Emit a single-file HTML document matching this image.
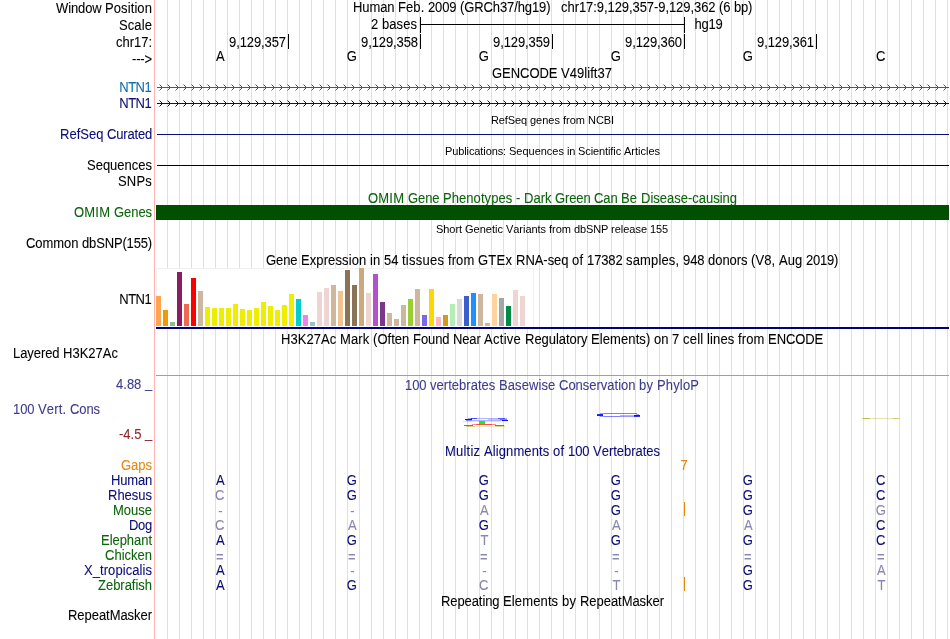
<!DOCTYPE html>
<html lang="en"><head><meta charset="utf-8"><title>UCSC Genome Browser chr17:9,129,357-9,129,362</title>
<style>
html,body{margin:0;padding:0;background:#fff;}
body{width:950px;height:639px;position:relative;overflow:hidden;font-family:"Liberation Sans", sans-serif;}
.t{position:absolute;white-space:pre;font-kerning:none;font-family:"Liberation Sans", sans-serif;font-size:13px;line-height:15px;transform-origin:0 12px;transform:scaleY(1.065);-webkit-text-stroke:0.08px;}
.s{font-size:11px;line-height:12px;transform:none;-webkit-text-stroke:0;}
.r{position:absolute;}
svg{position:absolute;left:0;top:0;}
#w{position:absolute;left:0;top:0;width:950px;height:639px;will-change:transform;}
</style></head><body><div id="w">
<div class="r" style="left:167px;top:0px;width:1px;height:639px;background:#dcdcff;"></div>
<div class="r" style="left:179px;top:0px;width:1px;height:639px;background:#dcdcff;"></div>
<div class="r" style="left:191px;top:0px;width:1px;height:639px;background:#dcdcff;"></div>
<div class="r" style="left:203px;top:0px;width:1px;height:639px;background:#dcdcff;"></div>
<div class="r" style="left:215px;top:0px;width:1px;height:639px;background:#dcdcff;"></div>
<div class="r" style="left:227px;top:0px;width:1px;height:639px;background:#dcdcff;"></div>
<div class="r" style="left:239px;top:0px;width:1px;height:639px;background:#dcdcff;"></div>
<div class="r" style="left:251px;top:0px;width:1px;height:639px;background:#dcdcff;"></div>
<div class="r" style="left:263px;top:0px;width:1px;height:639px;background:#dcdcff;"></div>
<div class="r" style="left:275px;top:0px;width:1px;height:639px;background:#dcdcff;"></div>
<div class="r" style="left:287px;top:0px;width:1px;height:639px;background:#dcdcff;"></div>
<div class="r" style="left:299px;top:0px;width:1px;height:639px;background:#dcdcff;"></div>
<div class="r" style="left:311px;top:0px;width:1px;height:639px;background:#dcdcff;"></div>
<div class="r" style="left:323px;top:0px;width:1px;height:639px;background:#dcdcff;"></div>
<div class="r" style="left:335px;top:0px;width:1px;height:639px;background:#dcdcff;"></div>
<div class="r" style="left:347px;top:0px;width:1px;height:639px;background:#dcdcff;"></div>
<div class="r" style="left:359px;top:0px;width:1px;height:639px;background:#dcdcff;"></div>
<div class="r" style="left:371px;top:0px;width:1px;height:639px;background:#dcdcff;"></div>
<div class="r" style="left:383px;top:0px;width:1px;height:639px;background:#dcdcff;"></div>
<div class="r" style="left:395px;top:0px;width:1px;height:639px;background:#dcdcff;"></div>
<div class="r" style="left:407px;top:0px;width:1px;height:639px;background:#dcdcff;"></div>
<div class="r" style="left:419px;top:0px;width:1px;height:639px;background:#dcdcff;"></div>
<div class="r" style="left:431px;top:0px;width:1px;height:639px;background:#dcdcff;"></div>
<div class="r" style="left:443px;top:0px;width:1px;height:639px;background:#dcdcff;"></div>
<div class="r" style="left:455px;top:0px;width:1px;height:639px;background:#dcdcff;"></div>
<div class="r" style="left:467px;top:0px;width:1px;height:639px;background:#dcdcff;"></div>
<div class="r" style="left:479px;top:0px;width:1px;height:639px;background:#dcdcff;"></div>
<div class="r" style="left:491px;top:0px;width:1px;height:639px;background:#dcdcff;"></div>
<div class="r" style="left:503px;top:0px;width:1px;height:639px;background:#dcdcff;"></div>
<div class="r" style="left:515px;top:0px;width:1px;height:639px;background:#dcdcff;"></div>
<div class="r" style="left:527px;top:0px;width:1px;height:639px;background:#dcdcff;"></div>
<div class="r" style="left:539px;top:0px;width:1px;height:639px;background:#dcdcff;"></div>
<div class="r" style="left:551px;top:0px;width:1px;height:639px;background:#dcdcff;"></div>
<div class="r" style="left:563px;top:0px;width:1px;height:639px;background:#dcdcff;"></div>
<div class="r" style="left:575px;top:0px;width:1px;height:639px;background:#dcdcff;"></div>
<div class="r" style="left:587px;top:0px;width:1px;height:639px;background:#dcdcff;"></div>
<div class="r" style="left:599px;top:0px;width:1px;height:639px;background:#dcdcff;"></div>
<div class="r" style="left:611px;top:0px;width:1px;height:639px;background:#dcdcff;"></div>
<div class="r" style="left:623px;top:0px;width:1px;height:639px;background:#dcdcff;"></div>
<div class="r" style="left:635px;top:0px;width:1px;height:639px;background:#dcdcff;"></div>
<div class="r" style="left:647px;top:0px;width:1px;height:639px;background:#dcdcff;"></div>
<div class="r" style="left:659px;top:0px;width:1px;height:639px;background:#dcdcff;"></div>
<div class="r" style="left:671px;top:0px;width:1px;height:639px;background:#dcdcff;"></div>
<div class="r" style="left:683px;top:0px;width:1px;height:639px;background:#dcdcff;"></div>
<div class="r" style="left:695px;top:0px;width:1px;height:639px;background:#dcdcff;"></div>
<div class="r" style="left:707px;top:0px;width:1px;height:639px;background:#dcdcff;"></div>
<div class="r" style="left:719px;top:0px;width:1px;height:639px;background:#dcdcff;"></div>
<div class="r" style="left:731px;top:0px;width:1px;height:639px;background:#dcdcff;"></div>
<div class="r" style="left:743px;top:0px;width:1px;height:639px;background:#dcdcff;"></div>
<div class="r" style="left:755px;top:0px;width:1px;height:639px;background:#dcdcff;"></div>
<div class="r" style="left:767px;top:0px;width:1px;height:639px;background:#dcdcff;"></div>
<div class="r" style="left:779px;top:0px;width:1px;height:639px;background:#dcdcff;"></div>
<div class="r" style="left:791px;top:0px;width:1px;height:639px;background:#dcdcff;"></div>
<div class="r" style="left:803px;top:0px;width:1px;height:639px;background:#dcdcff;"></div>
<div class="r" style="left:815px;top:0px;width:1px;height:639px;background:#dcdcff;"></div>
<div class="r" style="left:827px;top:0px;width:1px;height:639px;background:#dcdcff;"></div>
<div class="r" style="left:839px;top:0px;width:1px;height:639px;background:#dcdcff;"></div>
<div class="r" style="left:851px;top:0px;width:1px;height:639px;background:#dcdcff;"></div>
<div class="r" style="left:863px;top:0px;width:1px;height:639px;background:#dcdcff;"></div>
<div class="r" style="left:875px;top:0px;width:1px;height:639px;background:#dcdcff;"></div>
<div class="r" style="left:887px;top:0px;width:1px;height:639px;background:#dcdcff;"></div>
<div class="r" style="left:899px;top:0px;width:1px;height:639px;background:#dcdcff;"></div>
<div class="r" style="left:911px;top:0px;width:1px;height:639px;background:#dcdcff;"></div>
<div class="r" style="left:923px;top:0px;width:1px;height:639px;background:#dcdcff;"></div>
<div class="r" style="left:935px;top:0px;width:1px;height:639px;background:#dcdcff;"></div>
<div class="r" style="left:947px;top:0px;width:1px;height:639px;background:#dcdcff;"></div>
<div class="r" style="left:154px;top:0px;width:1px;height:639px;background:#ffb4b4;"></div>
<div class="t" style="top:1px;left:56px;color:#000;"><span style="letter-spacing:-0.121px">Window </span><span style="letter-spacing:0.094px">Position</span></div>
<div class="t" style="top:18px;left:119px;color:#000;"><span style="letter-spacing:0.096px">Scale</span></div>
<div class="t" style="top:35px;left:116px;color:#000;"><span style="letter-spacing:-0.022px">chr17:</span></div>
<div class="t" style="top:51.7px;left:132px;color:#000;"><span style="letter-spacing:-0.145px">---&gt;</span></div>
<div class="t" style="top:0px;left:353px;color:#000;"><span style="letter-spacing:-0.087px">Human </span><span style="letter-spacing:0.075px">Feb. </span><span style="letter-spacing:-0.106px">2009 </span><span style="letter-spacing:-0.100px">(GRCh37/hg19)   </span><span style="letter-spacing:-0.067px">chr17:9,129,357-9,129,362 </span><span style="letter-spacing:-0.057px">(6 </span><span style="letter-spacing:-0.263px">bp)</span></div>
<div class="t" style="top:17px;left:371px;color:#000;"><span style="letter-spacing:0.079px">2 </span><span style="letter-spacing:0.062px">bases</span></div>
<div class="r" style="left:420px;top:24px;width:265px;height:1px;background:#000;"></div>
<div class="r" style="left:420px;top:17px;width:1px;height:16px;background:#000;"></div>
<div class="r" style="left:684px;top:17px;width:1px;height:16px;background:#000;"></div>
<div class="t" style="top:17px;left:694.5px;color:#000;"><span style="letter-spacing:-0.230px">hg19</span></div>
<div class="r" style="left:288px;top:34px;width:1px;height:15px;background:#000;"></div>
<div class="t" style="top:35px;left:229px;color:#000;"><span style="letter-spacing:-0.093px">9,129,357</span></div>
<div class="r" style="left:420px;top:34px;width:1px;height:15px;background:#000;"></div>
<div class="t" style="top:35px;left:361px;color:#000;"><span style="letter-spacing:-0.093px">9,129,358</span></div>
<div class="r" style="left:552px;top:34px;width:1px;height:15px;background:#000;"></div>
<div class="t" style="top:35px;left:493px;color:#000;"><span style="letter-spacing:-0.093px">9,129,359</span></div>
<div class="r" style="left:684px;top:34px;width:1px;height:15px;background:#000;"></div>
<div class="t" style="top:35px;left:625px;color:#000;"><span style="letter-spacing:-0.093px">9,129,360</span></div>
<div class="r" style="left:816px;top:34px;width:1px;height:15px;background:#000;"></div>
<div class="t" style="top:35px;left:757px;color:#000;"><span style="letter-spacing:-0.093px">9,129,361</span></div>
<div class="t" style="top:49px;left:215.9px;color:#000;"><span style="letter-spacing:0.329px">A</span></div>
<div class="t" style="top:49px;left:346.75px;color:#000;"><span style="letter-spacing:-0.112px">G</span></div>
<div class="t" style="top:49px;left:478.75px;color:#000;"><span style="letter-spacing:-0.112px">G</span></div>
<div class="t" style="top:49px;left:610.75px;color:#000;"><span style="letter-spacing:-0.112px">G</span></div>
<div class="t" style="top:49px;left:742.75px;color:#000;"><span style="letter-spacing:-0.112px">G</span></div>
<div class="t" style="top:49px;left:876px;color:#000;"><span style="letter-spacing:-0.388px">C</span></div>
<div class="t" style="top:66px;left:492px;color:#000;"><span style="letter-spacing:-0.043px">GENCODE </span><span style="letter-spacing:0.045px">V49lift37</span></div>
<div class="t" style="top:80px;left:119.3px;color:#0c6cb0;"><span style="letter-spacing:-0.537px">NTN1</span></div>
<div class="t" style="top:96px;left:119.3px;color:#0c0c78;"><span style="letter-spacing:-0.537px">NTN1</span></div>
<div class="r" style="left:157px;top:87px;width:792px;height:1px;background:#0c6cb0;"></div>
<svg width="950" height="639" style="pointer-events:none"><path d="M159,84L162,87L159,90M167,84L170,87L167,90M175,84L178,87L175,90M183,84L186,87L183,90M191,84L194,87L191,90M199,84L202,87L199,90M207,84L210,87L207,90M215,84L218,87L215,90M223,84L226,87L223,90M231,84L234,87L231,90M239,84L242,87L239,90M247,84L250,87L247,90M255,84L258,87L255,90M263,84L266,87L263,90M271,84L274,87L271,90M279,84L282,87L279,90M287,84L290,87L287,90M295,84L298,87L295,90M303,84L306,87L303,90M311,84L314,87L311,90M319,84L322,87L319,90M327,84L330,87L327,90M335,84L338,87L335,90M343,84L346,87L343,90M351,84L354,87L351,90M359,84L362,87L359,90M367,84L370,87L367,90M375,84L378,87L375,90M383,84L386,87L383,90M391,84L394,87L391,90M399,84L402,87L399,90M407,84L410,87L407,90M415,84L418,87L415,90M423,84L426,87L423,90M431,84L434,87L431,90M439,84L442,87L439,90M447,84L450,87L447,90M455,84L458,87L455,90M463,84L466,87L463,90M471,84L474,87L471,90M479,84L482,87L479,90M487,84L490,87L487,90M495,84L498,87L495,90M503,84L506,87L503,90M511,84L514,87L511,90M519,84L522,87L519,90M527,84L530,87L527,90M535,84L538,87L535,90M543,84L546,87L543,90M551,84L554,87L551,90M559,84L562,87L559,90M567,84L570,87L567,90M575,84L578,87L575,90M583,84L586,87L583,90M591,84L594,87L591,90M599,84L602,87L599,90M607,84L610,87L607,90M615,84L618,87L615,90M623,84L626,87L623,90M631,84L634,87L631,90M639,84L642,87L639,90M647,84L650,87L647,90M655,84L658,87L655,90M663,84L666,87L663,90M671,84L674,87L671,90M679,84L682,87L679,90M687,84L690,87L687,90M695,84L698,87L695,90M703,84L706,87L703,90M711,84L714,87L711,90M719,84L722,87L719,90M727,84L730,87L727,90M735,84L738,87L735,90M743,84L746,87L743,90M751,84L754,87L751,90M759,84L762,87L759,90M767,84L770,87L767,90M775,84L778,87L775,90M783,84L786,87L783,90M791,84L794,87L791,90M799,84L802,87L799,90M807,84L810,87L807,90M815,84L818,87L815,90M823,84L826,87L823,90M831,84L834,87L831,90M839,84L842,87L839,90M847,84L850,87L847,90M855,84L858,87L855,90M863,84L866,87L863,90M871,84L874,87L871,90M879,84L882,87L879,90M887,84L890,87L887,90M895,84L898,87L895,90M903,84L906,87L903,90M911,84L914,87L911,90M919,84L922,87L919,90M927,84L930,87L927,90M935,84L938,87L935,90M943,84L946,87L943,90" transform="translate(0.5,0.5)" fill="none" stroke="#0c6cb0" stroke-width="1"/></svg>
<div class="r" style="left:157px;top:103px;width:792px;height:1px;background:#0c0c78;"></div>
<svg width="950" height="639" style="pointer-events:none"><path d="M159,100L162,103L159,106M167,100L170,103L167,106M175,100L178,103L175,106M183,100L186,103L183,106M191,100L194,103L191,106M199,100L202,103L199,106M207,100L210,103L207,106M215,100L218,103L215,106M223,100L226,103L223,106M231,100L234,103L231,106M239,100L242,103L239,106M247,100L250,103L247,106M255,100L258,103L255,106M263,100L266,103L263,106M271,100L274,103L271,106M279,100L282,103L279,106M287,100L290,103L287,106M295,100L298,103L295,106M303,100L306,103L303,106M311,100L314,103L311,106M319,100L322,103L319,106M327,100L330,103L327,106M335,100L338,103L335,106M343,100L346,103L343,106M351,100L354,103L351,106M359,100L362,103L359,106M367,100L370,103L367,106M375,100L378,103L375,106M383,100L386,103L383,106M391,100L394,103L391,106M399,100L402,103L399,106M407,100L410,103L407,106M415,100L418,103L415,106M423,100L426,103L423,106M431,100L434,103L431,106M439,100L442,103L439,106M447,100L450,103L447,106M455,100L458,103L455,106M463,100L466,103L463,106M471,100L474,103L471,106M479,100L482,103L479,106M487,100L490,103L487,106M495,100L498,103L495,106M503,100L506,103L503,106M511,100L514,103L511,106M519,100L522,103L519,106M527,100L530,103L527,106M535,100L538,103L535,106M543,100L546,103L543,106M551,100L554,103L551,106M559,100L562,103L559,106M567,100L570,103L567,106M575,100L578,103L575,106M583,100L586,103L583,106M591,100L594,103L591,106M599,100L602,103L599,106M607,100L610,103L607,106M615,100L618,103L615,106M623,100L626,103L623,106M631,100L634,103L631,106M639,100L642,103L639,106M647,100L650,103L647,106M655,100L658,103L655,106M663,100L666,103L663,106M671,100L674,103L671,106M679,100L682,103L679,106M687,100L690,103L687,106M695,100L698,103L695,106M703,100L706,103L703,106M711,100L714,103L711,106M719,100L722,103L719,106M727,100L730,103L727,106M735,100L738,103L735,106M743,100L746,103L743,106M751,100L754,103L751,106M759,100L762,103L759,106M767,100L770,103L767,106M775,100L778,103L775,106M783,100L786,103L783,106M791,100L794,103L791,106M799,100L802,103L799,106M807,100L810,103L807,106M815,100L818,103L815,106M823,100L826,103L823,106M831,100L834,103L831,106M839,100L842,103L839,106M847,100L850,103L847,106M855,100L858,103L855,106M863,100L866,103L863,106M871,100L874,103L871,106M879,100L882,103L879,106M887,100L890,103L887,106M895,100L898,103L895,106M903,100L906,103L903,106M911,100L914,103L911,106M919,100L922,103L919,106M927,100L930,103L927,106M935,100L938,103L935,106M943,100L946,103L943,106" transform="translate(0.5,0.5)" fill="none" stroke="#0c0c78" stroke-width="1"/></svg>
<div class="t s" style="top:114px;left:491px;color:#000;"><span style="letter-spacing:-0.107px">RefSeq </span><span style="letter-spacing:-0.004px">genes </span><span style="letter-spacing:-0.011px">from </span><span style="letter-spacing:-0.070px">NCBI</span></div>
<div class="t" style="top:127px;left:60px;color:#0c0c78;"><span style="letter-spacing:0.004px">RefSeq </span><span style="letter-spacing:-0.178px">Curated</span></div>
<div class="r" style="left:157px;top:134px;width:792px;height:1px;background:#0c0c78;"></div>
<div class="t s" style="top:145px;left:445px;color:#000;"><span style="letter-spacing:-0.102px">Publications: </span><span style="letter-spacing:-0.010px">Sequences </span><span style="letter-spacing:-0.206px">in </span><span style="letter-spacing:-0.097px">Scientific </span><span style="letter-spacing:-0.008px">Articles</span></div>
<div class="t" style="top:158px;left:87px;color:#000;"><span style="letter-spacing:-0.006px">Sequences</span></div>
<div class="r" style="left:157px;top:165px;width:792px;height:1px;background:#000;"></div>
<div class="t" style="top:174px;left:118px;color:#000;"><span style="letter-spacing:0.193px">SNPs</span></div>
<div class="t" style="top:191px;left:368px;color:#0c640c;"><span style="letter-spacing:0.201px">OMIM </span><span style="letter-spacing:-0.083px">Gene </span><span style="letter-spacing:0.066px">Phenotypes </span><span style="letter-spacing:0.030px">- </span><span style="letter-spacing:-0.012px">Dark </span><span style="letter-spacing:-0.124px">Green </span><span style="letter-spacing:-0.115px">Can </span><span style="letter-spacing:0.162px">Be </span><span style="letter-spacing:-0.007px">Disease-causing</span></div>
<div class="t" style="top:205px;left:74px;color:#0c640c;"><span style="letter-spacing:0.201px">OMIM </span><span style="letter-spacing:-0.060px">Genes</span></div>
<div class="r" style="left:156px;top:205px;width:793px;height:15px;background:#005000;"></div>
<div class="t s" style="top:223px;left:436px;color:#000;"><span style="letter-spacing:-0.058px">Short </span><span style="letter-spacing:0.004px">Genetic </span><span style="letter-spacing:-0.045px">Variants </span><span style="letter-spacing:-0.011px">from </span><span style="letter-spacing:-0.152px">dbSNP </span><span style="letter-spacing:-0.017px">release </span><span style="letter-spacing:-0.118px">155</span></div>
<div class="t" style="top:236px;left:26px;color:#000;"><span style="letter-spacing:-0.050px">Common </span><span style="letter-spacing:-0.154px">dbSNP(155)</span></div>
<div class="t" style="top:253px;left:266px;color:#000;"><span style="letter-spacing:-0.083px">Gene </span><span style="letter-spacing:0.098px">Expression </span><span style="letter-spacing:0.090px">in </span><span style="letter-spacing:-0.024px">54 </span><span style="letter-spacing:0.241px">tissues </span><span style="letter-spacing:0.078px">from </span><span style="letter-spacing:0.233px">GTEx </span><span style="letter-spacing:-0.044px">RNA-seq </span><span style="letter-spacing:0.182px">of </span><span style="letter-spacing:-0.127px">17382 </span><span style="letter-spacing:0.152px">samples, </span><span style="letter-spacing:-0.075px">948 </span><span style="letter-spacing:-0.052px">donors </span><span style="letter-spacing:0.109px">(V8, </span><span style="letter-spacing:0.064px">Aug </span><span style="letter-spacing:-0.250px">2019)</span></div>
<div class="t" style="top:292px;left:119.3px;color:#000;"><span style="letter-spacing:-0.537px">NTN1</span></div>
<div class="r" style="left:156px;top:268px;width:378px;height:59px;background:#fff;box-shadow:inset 1px 1px 0 #f0f0f0, inset -1px 0 0 #f0f0f0;"></div>
<div class="r" style="left:156px;top:296px;width:5px;height:30px;background:#ffa54f;"></div>
<div class="r" style="left:163px;top:310px;width:5px;height:16px;background:#ee9a00;"></div>
<div class="r" style="left:170px;top:322px;width:5px;height:4px;background:#8fbc8f;"></div>
<div class="r" style="left:177px;top:272px;width:5px;height:54px;background:#8b1c62;"></div>
<div class="r" style="left:184px;top:304px;width:5px;height:22px;background:#ee6a50;"></div>
<div class="r" style="left:191px;top:278px;width:5px;height:48px;background:#ff0000;"></div>
<div class="r" style="left:198px;top:291px;width:5px;height:35px;background:#cdb79e;"></div>
<div class="r" style="left:205px;top:307px;width:5px;height:19px;background:#eeee00;"></div>
<div class="r" style="left:212px;top:308px;width:5px;height:18px;background:#eeee00;"></div>
<div class="r" style="left:219px;top:308px;width:5px;height:18px;background:#eeee00;"></div>
<div class="r" style="left:226px;top:308px;width:5px;height:18px;background:#eeee00;"></div>
<div class="r" style="left:233px;top:304px;width:5px;height:22px;background:#eeee00;"></div>
<div class="r" style="left:240px;top:309px;width:5px;height:17px;background:#eeee00;"></div>
<div class="r" style="left:247px;top:310px;width:5px;height:16px;background:#eeee00;"></div>
<div class="r" style="left:254px;top:308px;width:5px;height:18px;background:#eeee00;"></div>
<div class="r" style="left:261px;top:302px;width:5px;height:24px;background:#eeee00;"></div>
<div class="r" style="left:268px;top:306px;width:5px;height:20px;background:#eeee00;"></div>
<div class="r" style="left:275px;top:310px;width:5px;height:16px;background:#eeee00;"></div>
<div class="r" style="left:282px;top:305px;width:5px;height:21px;background:#eeee00;"></div>
<div class="r" style="left:289px;top:294px;width:5px;height:32px;background:#eeee00;"></div>
<div class="r" style="left:296px;top:299px;width:5px;height:27px;background:#00cdcd;"></div>
<div class="r" style="left:303px;top:315px;width:5px;height:11px;background:#ee82ee;"></div>
<div class="r" style="left:310px;top:322px;width:5px;height:4px;background:#9ac0cd;"></div>
<div class="r" style="left:317px;top:292px;width:5px;height:34px;background:#eed5d2;"></div>
<div class="r" style="left:324px;top:288px;width:5px;height:38px;background:#eed5d2;"></div>
<div class="r" style="left:331px;top:285px;width:5px;height:41px;background:#cdb79e;"></div>
<div class="r" style="left:338px;top:291px;width:5px;height:35px;background:#eec591;"></div>
<div class="r" style="left:345px;top:270px;width:5px;height:56px;background:#8b7355;"></div>
<div class="r" style="left:352px;top:285px;width:5px;height:41px;background:#8b7355;"></div>
<div class="r" style="left:359px;top:268px;width:5px;height:58px;background:#cdaa7d;"></div>
<div class="r" style="left:366px;top:293px;width:5px;height:33px;background:#eed5d2;"></div>
<div class="r" style="left:373px;top:274px;width:5px;height:52px;background:#b452cd;"></div>
<div class="r" style="left:380px;top:302px;width:5px;height:24px;background:#7a378b;"></div>
<div class="r" style="left:387px;top:313px;width:5px;height:13px;background:#cdb79e;"></div>
<div class="r" style="left:394px;top:319px;width:5px;height:7px;background:#cdb79e;"></div>
<div class="r" style="left:401px;top:305px;width:5px;height:21px;background:#cdb79e;"></div>
<div class="r" style="left:408px;top:299px;width:5px;height:27px;background:#9acd32;"></div>
<div class="r" style="left:415px;top:289px;width:5px;height:37px;background:#cdb79e;"></div>
<div class="r" style="left:422px;top:315px;width:5px;height:11px;background:#7a67ee;"></div>
<div class="r" style="left:429px;top:289px;width:5px;height:37px;background:#ffd700;"></div>
<div class="r" style="left:436px;top:317px;width:5px;height:9px;background:#ffb6c1;"></div>
<div class="r" style="left:443px;top:315px;width:5px;height:11px;background:#cd9b1d;"></div>
<div class="r" style="left:450px;top:304px;width:5px;height:22px;background:#b4eeb4;"></div>
<div class="r" style="left:457px;top:299px;width:5px;height:27px;background:#d9d9d9;"></div>
<div class="r" style="left:464px;top:296px;width:5px;height:30px;background:#3a5fcd;"></div>
<div class="r" style="left:471px;top:293px;width:5px;height:33px;background:#1e90ff;"></div>
<div class="r" style="left:478px;top:294px;width:5px;height:32px;background:#cdb79e;"></div>
<div class="r" style="left:485px;top:323px;width:5px;height:3px;background:#cdb79e;"></div>
<div class="r" style="left:492px;top:294px;width:5px;height:32px;background:#ffd39b;"></div>
<div class="r" style="left:499px;top:298px;width:5px;height:28px;background:#a6a6a6;"></div>
<div class="r" style="left:506px;top:306px;width:5px;height:20px;background:#008b45;"></div>
<div class="r" style="left:513px;top:290px;width:5px;height:36px;background:#eed5d2;"></div>
<div class="r" style="left:520px;top:296px;width:5px;height:30px;background:#eed5d2;"></div>
<div class="r" style="left:156px;top:327px;width:793px;height:2px;background:#00007a;"></div>
<div class="t" style="top:332px;left:281px;color:#000;"><span style="letter-spacing:0.059px">H3K27Ac </span><span style="letter-spacing:0.100px">Mark </span><span style="letter-spacing:0.038px">(Often </span><span style="letter-spacing:-0.079px">Found </span><span style="letter-spacing:-0.158px">Near </span><span style="letter-spacing:0.284px">Active </span><span style="letter-spacing:-0.044px">Regulatory </span><span style="letter-spacing:0.087px">Elements) </span><span style="letter-spacing:-0.024px">on </span><span style="letter-spacing:0.079px">7 </span><span style="letter-spacing:0.176px">cell </span><span style="letter-spacing:0.109px">lines </span><span style="letter-spacing:0.078px">from </span><span style="letter-spacing:-0.103px">ENCODE</span></div>
<div class="t" style="top:346px;left:13px;color:#000;"><span style="letter-spacing:-0.074px">Layered </span><span style="letter-spacing:0.011px">H3K27Ac</span></div>
<div class="r" style="left:156px;top:375px;width:793px;height:1px;background:#ff7f50;"></div>
<div class="t" style="top:378px;left:405px;color:#3c3c8c;"><span style="letter-spacing:-0.075px">100 </span><span style="letter-spacing:0.030px">vertebrates </span><span style="letter-spacing:0.083px">Basewise </span><span style="letter-spacing:-0.016px">Conservation </span><span style="letter-spacing:0.219px">by </span><span style="letter-spacing:0.135px">PhyloP</span></div>
<div class="t" style="top:377px;left:116px;color:#3c3c8c;"><span style="letter-spacing:0.017px">4.88 </span><span style="position:relative;top:-1px">_</span></div>
<div class="t" style="top:402px;left:13px;color:#3c3c8c;"><span style="letter-spacing:-0.075px">100 </span><span style="letter-spacing:0.156px">Vert. </span><span style="letter-spacing:-0.087px">Cons</span></div>
<div class="t" style="top:427px;left:119px;color:#8c2828;"><span style="letter-spacing:-0.003px">-4.5 </span><span style="position:relative;top:-1px">_</span></div>
<svg width="950" height="639" shape-rendering="crispEdges"><rect x="465" y="419" width="7" height="1" fill="#0000ff" fill-opacity="0.95"/><rect x="466" y="420" width="6" height="1" fill="#0000ff" fill-opacity="0.45"/><rect x="468" y="418" width="4" height="1" fill="#0000ff" fill-opacity="0.35"/><rect x="471" y="418" width="6" height="1" fill="#0000ff" fill-opacity="0.7"/><rect x="477" y="418" width="21" height="1" fill="#0000ff" fill-opacity="0.3"/><rect x="498" y="418" width="7" height="1" fill="#0000ff" fill-opacity="0.65"/><rect x="505" y="418" width="2" height="1" fill="#0000ff" fill-opacity="0.3"/><rect x="472" y="420" width="16" height="1" fill="#0000ff" fill-opacity="0.3"/><rect x="488" y="419" width="14" height="1" fill="#0000ff" fill-opacity="0.22"/><rect x="488" y="420" width="14" height="1" fill="#0000ff" fill-opacity="0.3"/><rect x="500" y="419" width="7" height="1" fill="#0000ff" fill-opacity="0.45"/><rect x="502" y="420" width="6" height="1" fill="#0000ff" fill-opacity="0.95"/><rect x="463" y="421" width="38" height="1" fill="#00ff00" fill-opacity="0.28"/><rect x="479" y="421" width="6" height="3" fill="#00ff00" fill-opacity="1"/><rect x="464" y="425" width="9" height="1" fill="#ff0000" fill-opacity="0.75"/><rect x="472" y="424" width="4" height="1" fill="#ff0000" fill-opacity="0.45"/><rect x="476" y="424" width="16" height="1" fill="#ff0000" fill-opacity="0.7"/><rect x="492" y="424" width="4" height="1" fill="#ff0000" fill-opacity="0.45"/><rect x="495" y="425" width="9" height="1" fill="#ff0000" fill-opacity="0.75"/><rect x="466" y="426" width="9" height="1" fill="#a0a000" fill-opacity="0.5"/><rect x="475" y="426" width="20" height="1" fill="#c8c870" fill-opacity="0.35"/><rect x="495" y="426" width="10" height="1" fill="#a0a000" fill-opacity="0.4"/><rect x="597" y="414" width="6" height="1" fill="#0000ff" fill-opacity="0.85"/><rect x="597" y="415" width="6" height="1" fill="#0000ff" fill-opacity="0.9"/><rect x="600" y="413" width="4" height="1" fill="#0000ff" fill-opacity="0.4"/><rect x="600" y="416" width="4" height="1" fill="#0000ff" fill-opacity="0.4"/><rect x="604" y="413" width="33" height="1" fill="#0000ff" fill-opacity="0.5"/><rect x="604" y="416" width="16" height="1" fill="#0000ff" fill-opacity="0.5"/><rect x="620" y="415" width="14" height="1" fill="#0000ff" fill-opacity="0.3"/><rect x="620" y="416" width="14" height="1" fill="#0000ff" fill-opacity="0.4"/><rect x="634" y="415" width="6" height="1" fill="#0000ff" fill-opacity="0.95"/><rect x="634" y="416" width="6" height="1" fill="#0000ff" fill-opacity="0.8"/><rect x="636" y="414" width="3" height="1" fill="#0000ff" fill-opacity="0.35"/><rect x="862" y="418" width="38" height="1" fill="#b4b428" fill-opacity="0.35"/><rect x="863" y="418" width="7" height="1" fill="#b4b428" fill-opacity="0.7"/><rect x="893" y="418" width="6" height="1" fill="#b4b428" fill-opacity="0.5"/></svg>
<div class="t" style="top:444px;left:445px;color:#0c0c78;"><span style="letter-spacing:0.206px">Multiz </span><span style="letter-spacing:0.098px">Alignments </span><span style="letter-spacing:0.182px">of </span><span style="letter-spacing:-0.075px">100 </span><span style="letter-spacing:-0.018px">Vertebrates</span></div>
<div class="t" style="top:458px;left:121px;color:#e8860c;"><span style="letter-spacing:-0.018px">Gaps</span></div>
<div class="t" style="top:458px;left:680.5px;color:#e8860c;"><span style="letter-spacing:-0.230px">7</span></div>
<div class="t" style="top:473px;left:111px;color:#0c0c78;"><span style="letter-spacing:-0.181px">Human</span></div>
<div class="t" style="top:473px;left:215.9px;color:#0c0c78;"><span style="letter-spacing:0.329px">A</span></div>
<div class="t" style="top:473px;left:346.75px;color:#0c0c78;"><span style="letter-spacing:-0.112px">G</span></div>
<div class="t" style="top:473px;left:478.75px;color:#0c0c78;"><span style="letter-spacing:-0.112px">G</span></div>
<div class="t" style="top:473px;left:610.75px;color:#0c0c78;"><span style="letter-spacing:-0.112px">G</span></div>
<div class="t" style="top:473px;left:742.75px;color:#0c0c78;"><span style="letter-spacing:-0.112px">G</span></div>
<div class="t" style="top:473px;left:876px;color:#0c0c78;"><span style="letter-spacing:-0.388px">C</span></div>
<div class="t" style="top:488px;left:108px;color:#0c0c78;"><span style="letter-spacing:-0.013px">Rhesus</span></div>
<div class="t" style="top:488px;left:215px;color:#8787b2;"><span style="letter-spacing:-0.388px">C</span></div>
<div class="t" style="top:488px;left:346.75px;color:#0c0c78;"><span style="letter-spacing:-0.112px">G</span></div>
<div class="t" style="top:488px;left:478.75px;color:#0c0c78;"><span style="letter-spacing:-0.112px">G</span></div>
<div class="t" style="top:488px;left:610.75px;color:#0c0c78;"><span style="letter-spacing:-0.112px">G</span></div>
<div class="t" style="top:488px;left:742.75px;color:#0c0c78;"><span style="letter-spacing:-0.112px">G</span></div>
<div class="t" style="top:488px;left:876px;color:#0c0c78;"><span style="letter-spacing:-0.388px">C</span></div>
<div class="t" style="top:503px;left:113px;color:#0c640c;"><span style="letter-spacing:-0.004px">Mouse</span></div>
<div class="t" style="top:504px;left:218.2px;color:#8787b2;"><span style="letter-spacing:-0.329px">-</span></div>
<div class="t" style="top:504px;left:350.2px;color:#8787b2;"><span style="letter-spacing:-0.329px">-</span></div>
<div class="t" style="top:503px;left:479.9px;color:#8787b2;"><span style="letter-spacing:0.329px">A</span></div>
<div class="t" style="top:503px;left:610.75px;color:#0c0c78;"><span style="letter-spacing:-0.112px">G</span></div>
<div class="t" style="top:503px;left:742.75px;color:#0c0c78;"><span style="letter-spacing:-0.112px">G</span></div>
<div class="t" style="top:503px;left:875.75px;color:#8787b2;"><span style="letter-spacing:-0.112px">G</span></div>
<div class="t" style="top:518px;left:129px;color:#0c0c78;"><span style="letter-spacing:-0.283px">Dog</span></div>
<div class="t" style="top:518px;left:215px;color:#8787b2;"><span style="letter-spacing:-0.388px">C</span></div>
<div class="t" style="top:518px;left:347.9px;color:#8787b2;"><span style="letter-spacing:0.329px">A</span></div>
<div class="t" style="top:518px;left:478.75px;color:#0c0c78;"><span style="letter-spacing:-0.112px">G</span></div>
<div class="t" style="top:518px;left:611.9px;color:#8787b2;"><span style="letter-spacing:0.329px">A</span></div>
<div class="t" style="top:518px;left:743.9px;color:#8787b2;"><span style="letter-spacing:0.329px">A</span></div>
<div class="t" style="top:518px;left:876px;color:#0c0c78;"><span style="letter-spacing:-0.388px">C</span></div>
<div class="t" style="top:533px;left:101px;color:#0c640c;"><span style="letter-spacing:-0.040px">Elephant</span></div>
<div class="t" style="top:533px;left:215.9px;color:#0c0c78;"><span style="letter-spacing:0.329px">A</span></div>
<div class="t" style="top:533px;left:346.75px;color:#0c0c78;"><span style="letter-spacing:-0.112px">G</span></div>
<div class="t" style="top:533px;left:480.4px;color:#8787b2;"><span style="letter-spacing:0.059px">T</span></div>
<div class="t" style="top:533px;left:610.75px;color:#0c0c78;"><span style="letter-spacing:-0.112px">G</span></div>
<div class="t" style="top:533px;left:742.75px;color:#0c0c78;"><span style="letter-spacing:-0.112px">G</span></div>
<div class="t" style="top:533px;left:876px;color:#0c0c78;"><span style="letter-spacing:-0.388px">C</span></div>
<div class="t" style="top:548px;left:105px;color:#0c640c;"><span style="letter-spacing:0.005px">Chicken</span></div>
<div class="t" style="top:550px;left:216px;color:#8787b2;"><span style="letter-spacing:0.408px">=</span></div>
<div class="t" style="top:550px;left:348px;color:#8787b2;"><span style="letter-spacing:0.408px">=</span></div>
<div class="t" style="top:550px;left:480px;color:#8787b2;"><span style="letter-spacing:0.408px">=</span></div>
<div class="t" style="top:550px;left:612px;color:#8787b2;"><span style="letter-spacing:0.408px">=</span></div>
<div class="t" style="top:550px;left:744px;color:#8787b2;"><span style="letter-spacing:0.408px">=</span></div>
<div class="t" style="top:550px;left:877px;color:#8787b2;"><span style="letter-spacing:0.408px">=</span></div>
<div class="t" style="top:563px;left:84px;color:#0c0c78;"><span style="letter-spacing:0.067px">X_tropicalis</span></div>
<div class="t" style="top:563px;left:215.9px;color:#0c0c78;"><span style="letter-spacing:0.329px">A</span></div>
<div class="t" style="top:564px;left:350.2px;color:#8787b2;"><span style="letter-spacing:-0.329px">-</span></div>
<div class="t" style="top:564px;left:482.2px;color:#8787b2;"><span style="letter-spacing:-0.329px">-</span></div>
<div class="t" style="top:564px;left:614.2px;color:#8787b2;"><span style="letter-spacing:-0.329px">-</span></div>
<div class="t" style="top:563px;left:742.75px;color:#0c0c78;"><span style="letter-spacing:-0.112px">G</span></div>
<div class="t" style="top:563px;left:876.9px;color:#8787b2;"><span style="letter-spacing:0.329px">A</span></div>
<div class="t" style="top:578px;left:98px;color:#0c640c;"><span style="letter-spacing:-0.021px">Zebrafish</span></div>
<div class="t" style="top:578px;left:215.9px;color:#0c0c78;"><span style="letter-spacing:0.329px">A</span></div>
<div class="t" style="top:578px;left:346.75px;color:#0c0c78;"><span style="letter-spacing:-0.112px">G</span></div>
<div class="t" style="top:578px;left:479px;color:#8787b2;"><span style="letter-spacing:-0.388px">C</span></div>
<div class="t" style="top:578px;left:612.4px;color:#8787b2;"><span style="letter-spacing:0.059px">T</span></div>
<div class="t" style="top:578px;left:742.75px;color:#0c0c78;"><span style="letter-spacing:-0.112px">G</span></div>
<div class="t" style="top:578px;left:877.4px;color:#8787b2;"><span style="letter-spacing:0.059px">T</span></div>
<div class="r" style="left:684px;top:502px;width:1px;height:14px;background:#e8860c;"></div>
<div class="r" style="left:684px;top:577px;width:1px;height:14px;background:#e8860c;"></div>
<div class="t" style="top:594px;left:441px;color:#000;"><span style="letter-spacing:-0.088px">Repeating </span><span style="letter-spacing:0.133px">Elements </span><span style="letter-spacing:0.219px">by </span><span style="letter-spacing:-0.045px">RepeatMasker</span></div>
<div class="t" style="top:608px;left:68px;color:#000;"><span style="letter-spacing:-0.045px">RepeatMasker</span></div>
</div></body></html>
